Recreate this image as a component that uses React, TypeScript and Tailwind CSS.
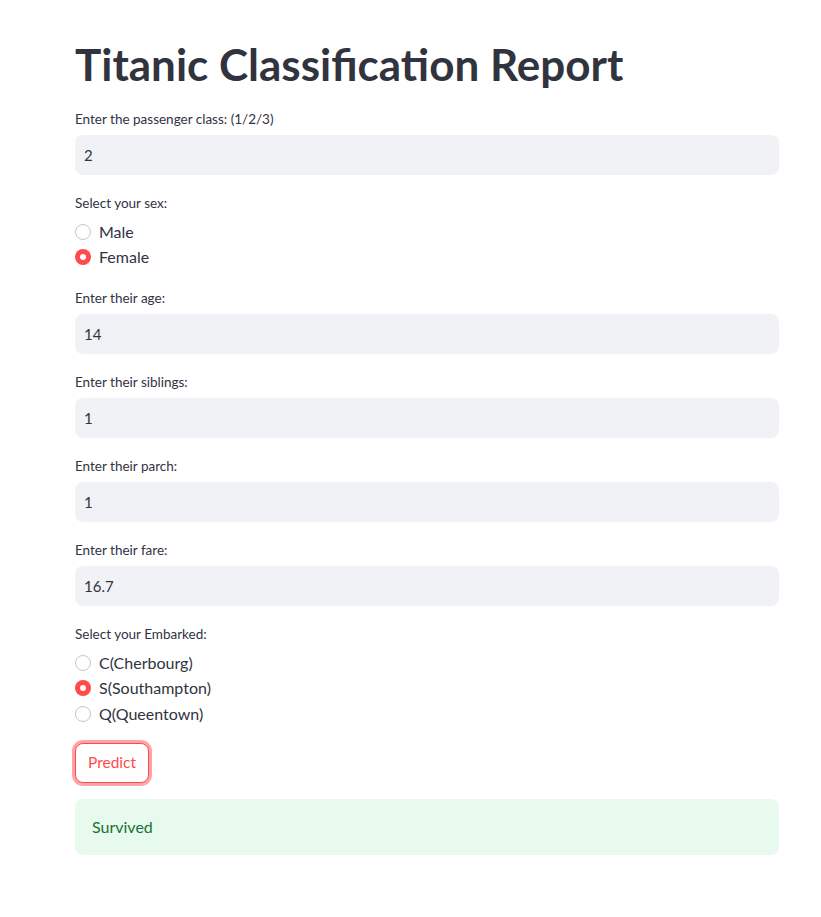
import { useState } from 'react';

const FONT = { fontFamily: '"Source Sans Pro", Lato, "Noto Sans", sans-serif' };

function Field({ label, value }: { label: string; value: string }) {
  return (
    <div className="flex flex-col">
      <label className="mb-1 flex h-6 items-center text-[13.5px] text-[#31333f]">{label}</label>
      <div className="flex h-10 items-center rounded-lg bg-[#f0f2f6] px-[9px] text-[15px] text-[#31333f]">{value}</div>
    </div>
  );
}

function Radio({ label, options, value, onChange }: { label: string; options: string[]; value: string; onChange: (v: string) => void }) {
  return (
    <div className="flex flex-col">
      <label className="mb-1 flex h-6 items-center text-[13.5px] text-[#31333f]">{label}</label>
      <div className="flex flex-col">
        {options.map((o) => {
          const on = o === value;
          return (
            <button key={o} type="button" onClick={() => onChange(o)} className="flex h-[25.5px] items-center gap-2 text-left">
              {on ? (
                <span className="flex h-4 w-4 items-center justify-center rounded-full bg-[#ff4b4b]">
                  <span className="h-[6px] w-[6px] rounded-full bg-white" />
                </span>
              ) : (
                <span className="h-4 w-4 rounded-full border border-[#c4c6cc] bg-white" />
              )}
              <span className="text-[16px] text-[#31333f]">{o}</span>
            </button>
          );
        })}
      </div>
    </div>
  );
}

export default function App() {
  const [sex, setSex] = useState('Female');
  const [port, setPort] = useState('S(Southampton)');

  return (
    <div className="min-h-screen bg-white" style={FONT}>
      <div className="ml-[75px] flex w-[704px] flex-col gap-4 pb-16 pt-[38px]">
        <h1 className="mb-px text-[44px] font-bold leading-[52px] text-[#31333f]">Titanic Classification Report</h1>
        <Field label="Enter the passenger class: (1/2/3)" value="2" />
        <Radio label="Select your sex:" options={['Male', 'Female']} value={sex} onChange={setSex} />
        <Field label="Enter their age:" value="14" />
        <Field label="Enter their siblings:" value="1" />
        <Field label="Enter their parch:" value="1" />
        <Field label="Enter their fare:" value="16.7" />
        <Radio label="Select your Embarked:" options={['C(Cherbourg)', 'S(Southampton)', 'Q(Queentown)']} value={port} onChange={setPort} />
        <div>
          <button
            type="button"
            className="h-10 rounded-lg border border-[#ff4b4b] bg-white px-3 text-[15.5px] text-[#ff4b4b] shadow-[0_0_0_3px_rgba(255,75,75,0.5)]"
          >
            Predict
          </button>
        </div>
        <div className="flex h-14 items-center rounded-lg bg-[#e8f9ee] px-[17px] text-[16px] text-[#177233]">Survived</div>
      </div>
    </div>
  );
}
